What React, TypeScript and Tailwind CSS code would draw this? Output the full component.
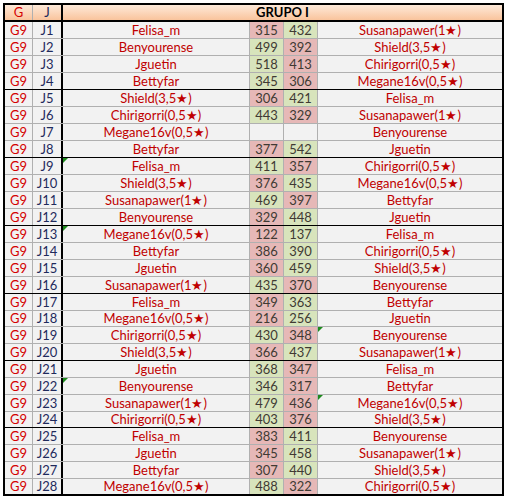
import React from 'react';

type Match = {
  j: string;
  home: string;
  a: number | null;
  b: number | null;
  away: string;
  markHome?: boolean;
  markAway?: boolean;
};

const matches: Match[] = [
  { j: 'J1', home: 'Felisa_m', a: 315, b: 432, away: 'Susanapawer(1★)' },
  { j: 'J2', home: 'Benyourense', a: 499, b: 392, away: 'Shield(3,5★)' },
  { j: 'J3', home: 'Jguetin', a: 518, b: 413, away: 'Chirigorri(0,5★)' },
  { j: 'J4', home: 'Bettyfar', a: 345, b: 306, away: 'Megane16v(0,5★)' },
  { j: 'J5', home: 'Shield(3,5★)', a: 306, b: 421, away: 'Felisa_m' },
  { j: 'J6', home: 'Chirigorri(0,5★)', a: 443, b: 329, away: 'Susanapawer(1★)' },
  { j: 'J7', home: 'Megane16v(0,5★)', a: null, b: null, away: 'Benyourense' },
  { j: 'J8', home: 'Bettyfar', a: 377, b: 542, away: 'Jguetin' },
  { j: 'J9', home: 'Felisa_m', a: 411, b: 357, away: 'Chirigorri(0,5★)', markHome: true },
  { j: 'J10', home: 'Shield(3,5★)', a: 376, b: 435, away: 'Megane16v(0,5★)' },
  { j: 'J11', home: 'Susanapawer(1★)', a: 469, b: 397, away: 'Bettyfar' },
  { j: 'J12', home: 'Benyourense', a: 329, b: 448, away: 'Jguetin' },
  { j: 'J13', home: 'Megane16v(0,5★)', a: 122, b: 137, away: 'Felisa_m', markHome: true },
  { j: 'J14', home: 'Bettyfar', a: 386, b: 390, away: 'Chirigorri(0,5★)' },
  { j: 'J15', home: 'Jguetin', a: 360, b: 459, away: 'Shield(3,5★)' },
  { j: 'J16', home: 'Susanapawer(1★)', a: 435, b: 370, away: 'Benyourense' },
  { j: 'J17', home: 'Felisa_m', a: 349, b: 363, away: 'Bettyfar' },
  { j: 'J18', home: 'Megane16v(0,5★)', a: 216, b: 256, away: 'Jguetin' },
  { j: 'J19', home: 'Chirigorri(0,5★)', a: 430, b: 348, away: 'Benyourense', markAway: true },
  { j: 'J20', home: 'Shield(3,5★)', a: 366, b: 437, away: 'Susanapawer(1★)' },
  { j: 'J21', home: 'Jguetin', a: 368, b: 347, away: 'Felisa_m' },
  { j: 'J22', home: 'Benyourense', a: 346, b: 317, away: 'Bettyfar', markHome: true },
  { j: 'J23', home: 'Susanapawer(1★)', a: 479, b: 436, away: 'Megane16v(0,5★)', markAway: true },
  { j: 'J24', home: 'Chirigorri(0,5★)', a: 403, b: 376, away: 'Shield(3,5★)' },
  { j: 'J25', home: 'Felisa_m', a: 383, b: 411, away: 'Benyourense' },
  { j: 'J26', home: 'Jguetin', a: 345, b: 458, away: 'Susanapawer(1★)' },
  { j: 'J27', home: 'Bettyfar', a: 307, b: 440, away: 'Shield(3,5★)' },
  { j: 'J28', home: 'Megane16v(0,5★)', a: 488, b: 322, away: 'Chirigorri(0,5★)' },
];

// a few rows are a pixel shorter in the sheet
const shortRows: Record<string, string> = { J18: 'h-[16px]', J24: 'h-[16px]', J28: 'h-[15px]' };

function Mark() {
  return (
    <span className="absolute left-0 top-0 w-0 h-0 border-t-[5px] border-r-[5px] border-t-[#1e8a1e] border-r-transparent" />
  );
}

function scoreBg(mine: number | null, other: number | null) {
  if (mine === null || other === null) return 'bg-[#f2f2f2]';
  return mine > other ? 'bg-[#d8e4bc]' : 'bg-[#e6b8b7]';
}

export default function App() {
  return (
    <div className="w-[509px] h-[503px] bg-white pt-[3px] pl-[3px] font-['Lato',sans-serif] text-[13px] leading-none">
      <div className="w-[501px] border-2 border-black">
        {/* header */}
        <div className="flex h-[17px] border-b-2 border-black bg-gradient-to-b from-[#fde9d9] to-[#f9c49c]">
          <div className="w-[28px] border-r border-[#b0b0b0] flex items-center justify-center text-[#d40000]">G</div>
          <div className="w-[30px] border-r-2 border-black flex items-center justify-center text-[#1f2a5c]">J</div>
          <div className="flex-1 flex items-center justify-center font-bold text-black">GRUPO I</div>
        </div>

        {/* rows */}
        {matches.map((m, i) => {
          const groupEnd = i % 4 === 3 && i !== matches.length - 1;
          const line = groupEnd ? 'border-b border-black' : 'border-b border-[#b0b0b0]';
          const last = i === matches.length - 1 ? 'border-b-0' : '';
          const h = shortRows[m.j] ?? 'h-[17px]';
          return (
            <div key={m.j} className={`flex ${h} bg-[#f2f2f2] ${line} ${last}`}>
              <div className="w-[28px] border-r border-[#b0b0b0] flex items-center justify-center text-[#d40000]">G9</div>
              <div className="w-[30px] border-r-2 border-black flex items-center justify-center text-[#1f2a5c]">{m.j}</div>
              <div className="relative w-[187px] border-r border-[#b0b0b0] flex items-center justify-center text-[#c00000]">
                {m.markHome && <Mark />}
                {m.home}
              </div>
              <div className={`w-[34px] border-r border-[#b0b0b0] flex items-center justify-center text-[#403a33] ${scoreBg(m.a, m.b)}`}>
                {m.a ?? ''}
              </div>
              <div className={`w-[34px] border-r border-[#b0b0b0] flex items-center justify-center text-[#403a33] ${scoreBg(m.b, m.a)}`}>
                {m.b ?? ''}
              </div>
              <div className="relative flex-1 flex items-center justify-center text-[#c00000]">
                {m.markAway && <Mark />}
                {m.away}
              </div>
            </div>
          );
        })}
      </div>
    </div>
  );
}
